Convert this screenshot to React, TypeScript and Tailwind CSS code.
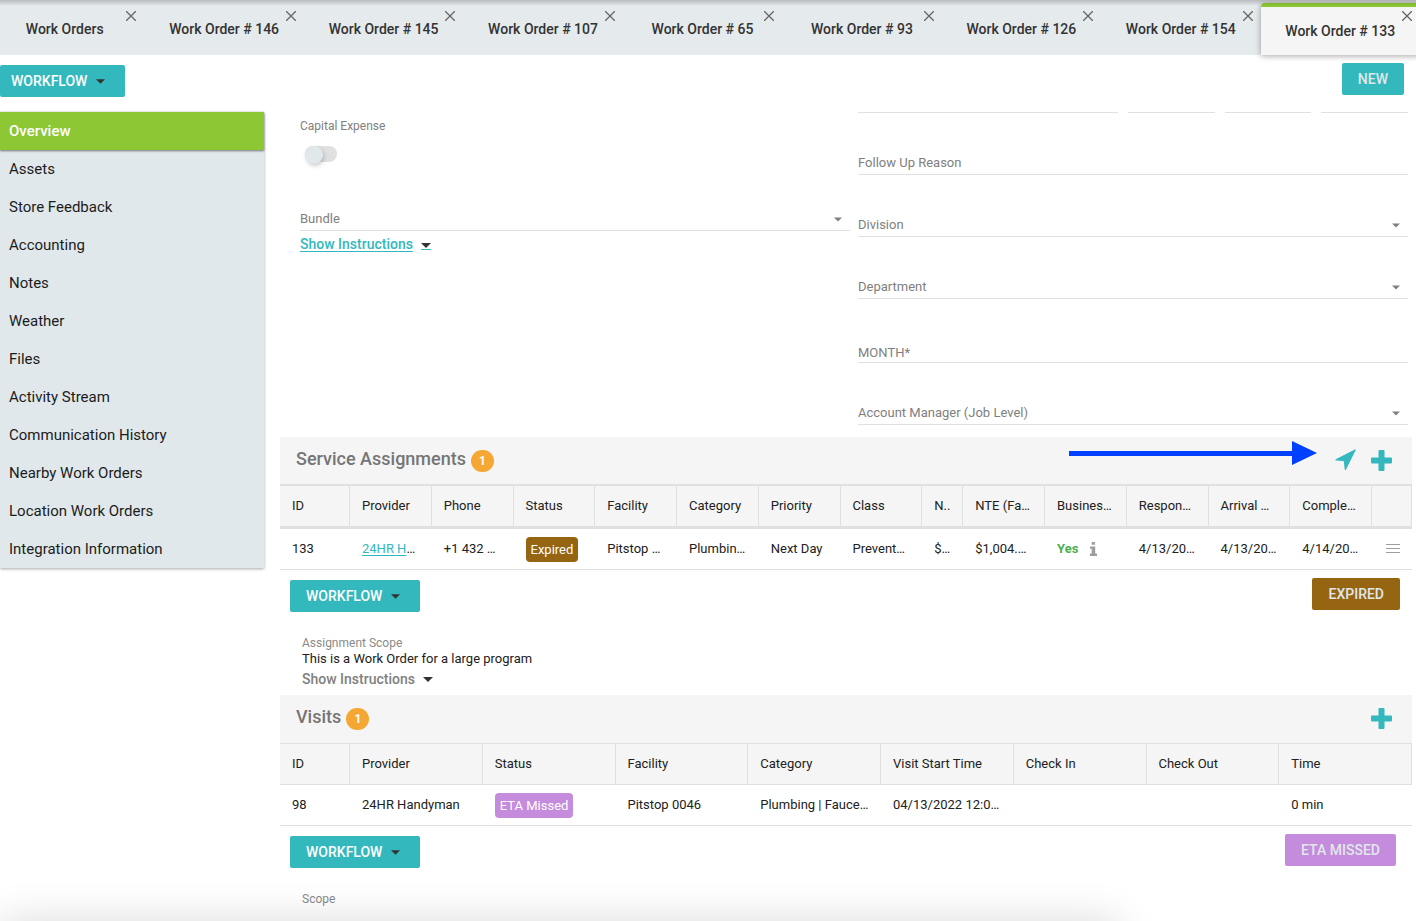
import { clsx } from "clsx";

const TABS = [
  "Work Orders",
  "Work Order # 146",
  "Work Order # 145",
  "Work Order # 107",
  "Work Order # 65",
  "Work Order # 93",
  "Work Order # 126",
  "Work Order # 154",
  "Work Order # 133",
];

const NAV = [
  "Overview",
  "Assets",
  "Store Feedback",
  "Accounting",
  "Notes",
  "Weather",
  "Files",
  "Activity Stream",
  "Communication History",
  "Nearby Work Orders",
  "Location Work Orders",
  "Integration Information",
];

const ASSIGNMENT_COLS = [
  "ID",
  "Provider",
  "Phone",
  "Status",
  "Facility",
  "Category",
  "Priority",
  "Class",
  "N..",
  "NTE (Fa…",
  "Busines…",
  "Respon…",
  "Arrival …",
  "Comple…",
  "",
];

const VISIT_COLS = [
  "ID",
  "Provider",
  "Status",
  "Facility",
  "Category",
  "Visit Start Time",
  "Check In",
  "Check Out",
  "Time",
];

function Caret({ className }: { className?: string }) {
  return (
    <svg viewBox="0 0 10 5" className={clsx("h-[5px] shrink-0", className)} aria-hidden="true">
      <path d="M0 0h10L5 5z" fill="currentColor" />
    </svg>
  );
}

function CloseIcon() {
  return (
    <svg viewBox="0 0 10 10" className="size-[10px]" aria-hidden="true">
      <path d="M0 0L10 10M10 0L0 10" stroke="currentColor" strokeWidth="1.3" />
    </svg>
  );
}

function InfoIcon() {
  return (
    <svg viewBox="0 0 7 14" className="h-3.5 w-[7px] text-[#9e9e9e]" aria-hidden="true">
      <path
        d="M1.7 0h3.2v2.8H1.7zM.3 4.6h4.9v7h1.4c.3 0 .4.1.4.4V14H0v-2c0-.3.1-.4.4-.4h1.3V6.8H0V5c0-.3.1-.4.3-.4z"
        fill="currentColor"
      />
    </svg>
  );
}

function DispatchIcon() {
  return (
    <svg viewBox="0 0 21 22" className="h-[22px] w-[21px]" aria-hidden="true">
      <path
        d="M20.3.8L10.3 20.9L9.3 11.8L.7 10.8z"
        fill="currentColor"
        stroke="currentColor"
        strokeLinejoin="round"
      />
    </svg>
  );
}

function Tab({ label, active }: { label: string; active: boolean }) {
  return (
    <div
      className={clsx(
        "relative min-w-0 flex-1",
        active &&
          "mt-[3px] rounded-t border-t-4 border-[#8dc834] bg-[#f5f5f5] shadow-[0_1px_6px_rgba(0,0,0,0.35)]",
      )}
    >
      <button
        className={clsx(
          "h-full w-full text-sm font-medium text-[#333]",
          active ? "pb-0" : "pt-0.5",
        )}
      >
        {label}
      </button>
      <button
        aria-label={`Close ${label}`}
        className={clsx("absolute right-2 text-[#666]", active ? "top-1" : "top-[11px]")}
      >
        <CloseIcon />
      </button>
    </div>
  );
}

function WorkflowButton({ className }: { className?: string }) {
  return (
    <button
      className={clsx(
        "flex h-8 items-center gap-[9px] rounded-xs bg-[#33b8be] text-sm font-medium text-white",
        className,
      )}
    >
      WORKFLOW
      <Caret className="w-[9px] text-[#333]" />
    </button>
  );
}

function Field({ label, select, className }: { label: string; select?: boolean; className?: string }) {
  return (
    <label
      className={clsx(
        "flex items-end border-b border-[#e0e0e0] text-[13px] leading-4 text-[#808080]",
        className,
      )}
    >
      <span className="shrink-0">{label}</span>
      {select ? (
        <>
          <select className="h-4 min-w-0 flex-1 appearance-none bg-transparent outline-none" />
          <Caret className="mr-2 mb-[5px] w-2" />
        </>
      ) : (
        <input className="h-4 min-w-0 flex-1 bg-transparent outline-none" />
      )}
    </label>
  );
}

function SectionHeader({ title, count, children }: { title: string; count: number; children: React.ReactNode }) {
  return (
    <div className="relative flex items-center justify-between bg-[#f5f5f5] pr-5 pl-4">
      <h2 className="flex items-center gap-[5px] pb-1 text-lg leading-11 font-medium text-[#757575]">
        {title}
        <span className="mt-1 flex h-[22px] w-[23px] items-center justify-center rounded-full bg-[#f4a733] text-xs font-bold text-white">
          {count}
        </span>
      </h2>
      <div className="flex items-center gap-[15px] pb-0.5 text-[#33b8be]">{children}</div>
    </div>
  );
}

function AddButton({ label }: { label: string }) {
  return (
    <button aria-label={label}>
      <svg viewBox="0 0 21 21" className="size-[21px]" aria-hidden="true">
        <path
          d="M8.5 0h4q1 0 1 1v6.5H20q1 0 1 1v4q0 1-1 1h-6.5V20q0 1-1 1h-4q-1 0-1-1v-6.5H1q-1 0-1-1v-4q0-1 1-1h6.5V1q0-1 1-1z"
          fill="currentColor"
        />
      </svg>
    </button>
  );
}

function StatusPill({ label, className }: { label: string; className: string }) {
  return (
    <span className={clsx("block w-fit rounded px-[5px] leading-[25px] text-white", className)}>
      {label}
    </span>
  );
}

export default function App() {
  return (
    <div className="relative h-screen overflow-hidden bg-white font-['Roboto',sans-serif] text-[#212121]">
      <header className="relative h-[55px] bg-[#e5eaed]">
        <div className="-mr-1 -ml-[15px] flex h-full">
          {TABS.map((tab, i) => (
            <Tab key={tab} label={tab} active={i === TABS.length - 1} />
          ))}
        </div>
        <div className="pointer-events-none absolute inset-x-0 top-0 h-1.5 bg-linear-to-b from-black/20 to-transparent" />
      </header>

      <div className="flex h-[57px] items-start justify-between pt-2 pr-3">
        <WorkflowButton className="mt-0.5 pr-5 pl-[11px]" />
        <button className="h-8 rounded-xs bg-[#33b8be] px-4 text-sm font-medium text-[#e0e8eb]">
          NEW
        </button>
      </div>

      <div className="flex items-start gap-4 pr-1">
        <nav className="w-[264px] shrink-0 bg-[#e0e8eb] shadow-[0_1px_3px_rgba(0,0,0,0.35)]">
          {NAV.map((item, i) => (
            <a
              key={item}
              href="#"
              className={clsx(
                "block pl-[9px] text-[15px] leading-[38px]",
                i === 0
                  ? "bg-[#8dc834] font-medium text-white shadow-[0_1px_2px_rgba(0,0,0,0.5)]"
                  : "text-[#1c1c1c]",
              )}
            >
              {item}
            </a>
          ))}
        </nav>

        <main className="min-w-0 flex-1 text-[13px]">
          <form className="grid grid-cols-2 gap-2 pr-1 pb-3 pl-5">
            <div>
              <label
                htmlFor="capital-expense"
                className="block pt-1.5 text-xs leading-4 text-[#808080]"
              >
                Capital Expense
              </label>
              <div className="relative mt-3 ml-[5px] h-[18px] w-8">
                <input
                  id="capital-expense"
                  type="checkbox"
                  role="switch"
                  className="mt-px block h-4 w-8 appearance-none rounded-full bg-[#e0e0e0]"
                />
                <span className="pointer-events-none absolute top-0 left-0 size-[18px] rounded-full bg-[#e0e8eb] shadow-[1px_2px_4px_rgba(0,0,0,0.2)]" />
              </div>
              <Field label="Bundle" select className="mt-9 h-[31px] pb-[3px]" />
              <a
                href="#"
                className="mt-[3px] flex items-center gap-2 text-sm font-medium text-[#33b8be] underline underline-offset-2"
              >
                Show Instructions
                <span className="mt-1 border-b border-[#33b8be] pb-px">
                  <Caret className="w-2.5 text-[#333]" />
                </span>
              </a>
            </div>
            <div>
              <div className="grid grid-cols-[3fr_1fr_1fr_1fr] gap-2.5">
                <div className="border-b border-[#e0e0e0]" />
                <div className="border-b border-[#e0e0e0]" />
                <div className="border-b border-[#e0e0e0]" />
                <div className="border-b border-[#e0e0e0]" />
              </div>
              <Field label="Follow Up Reason" className="h-[62px] pb-[3px]" />
              <Field label="Division" select className="h-[62px] pb-[3px]" />
              <Field label="Department" select className="h-[62px] pb-[3px]" />
              <Field label="MONTH*" className="h-16 pb-px" />
              <Field label="Account Manager (Job Level)" select className="h-[62px] pb-[3px]" />
            </div>
          </form>

          <section>
            <SectionHeader title="Service Assignments" count={1}>
              <svg
                viewBox="0 0 248 24"
                className="pointer-events-none absolute top-1 right-[95px] h-6 w-[248px]"
                aria-hidden="true"
              >
                <path d="M0 10h223V0l25 12-25 12v-9H0z" fill="#0040ff" />
              </svg>
              <button aria-label="Dispatch">
                <DispatchIcon />
              </button>
              <AddButton label="Add service assignment" />
            </SectionHeader>
            <table className="relative -mt-px w-full table-fixed border-separate border-spacing-0 text-left whitespace-nowrap">
              <colgroup>
                {ASSIGNMENT_COLS.map((col, i) => (
                  <col
                    key={i}
                    className={clsx(
                      i === 0 && "w-[70px]",
                      col === "N.." && "w-[41px]",
                      col === "" && "w-10",
                    )}
                  />
                ))}
              </colgroup>
              <thead className="bg-[#f5f5f5]">
                <tr>
                  {ASSIGNMENT_COLS.map((col, i) => (
                    <th
                      key={i}
                      className="h-[45px] border-t-2 border-r border-b-3 border-[#e0e0e0] p-0 pl-3 font-normal"
                    >
                      {col}
                    </th>
                  ))}
                </tr>
              </thead>
              <tbody>
                <tr className="*:h-[41px] *:border-b *:border-[#e0e0e0] *:p-0 *:pl-3">
                  <td>133</td>
                  <td>
                    <a href="#" className="text-[#33b8be] underline underline-offset-2">
                      24HR H
                    </a>
                    …
                  </td>
                  <td>+1 432 …</td>
                  <td>
                    <StatusPill label="Expired" className="bg-[#966512]" />
                  </td>
                  <td>Pitstop …</td>
                  <td>Plumbin…</td>
                  <td>Next Day</td>
                  <td>Prevent…</td>
                  <td>$…</td>
                  <td>$1,004.…</td>
                  <td>
                    <span className="flex items-center gap-3 font-bold text-[#4caf50]">
                      Yes
                      <InfoIcon />
                    </span>
                  </td>
                  <td>4/13/20…</td>
                  <td>4/13/20…</td>
                  <td>4/14/20…</td>
                  <td>
                    <button aria-label="Row menu" className="block pl-0.5">
                      <svg viewBox="0 0 14 10" className="h-2.5 w-3.5 text-[#9e9e9e]" aria-hidden="true">
                        <path d="M0 .5h14M0 4.5h14M0 8.5h14" stroke="currentColor" />
                      </svg>
                    </button>
                  </td>
                </tr>
              </tbody>
            </table>
            <div className="flex items-start justify-between pt-2 pr-3 pl-2.5">
              <WorkflowButton className="mt-0.5 pr-5 pl-4" />
              <button className="h-8 rounded-xs bg-[#966512] px-4 text-sm font-medium text-[#e0e8eb]">
                EXPIRED
              </button>
            </div>
            <div className="pt-[23px] pb-2 pl-[22px] leading-4">
              <p className="text-xs leading-4 text-[#8a8a8a]">Assignment Scope</p>
              <p>This is a Work Order for a large program</p>
              <button className="mt-1 flex items-center gap-2 text-sm leading-4 font-medium text-[#808080]">
                Show Instructions
                <Caret className="w-2.5 text-[#333]" />
              </button>
            </div>
          </section>

          <section>
            <SectionHeader title="Visits" count={1}>
              <AddButton label="Add visit" />
            </SectionHeader>
            <table className="w-full table-fixed border-separate border-spacing-0 text-left whitespace-nowrap">
              <colgroup>
                {VISIT_COLS.map((col, i) => (
                  <col key={col} className={clsx(i === 0 && "w-[70px]")} />
                ))}
              </colgroup>
              <thead className="bg-[#f5f5f5]">
                <tr>
                  {VISIT_COLS.map((col) => (
                    <th
                      key={col}
                      className="h-[42px] border-y border-r border-[#e0e0e0] p-0 pl-3 font-normal"
                    >
                      {col}
                    </th>
                  ))}
                </tr>
              </thead>
              <tbody>
                <tr className="*:h-[41px] *:border-b *:border-[#e0e0e0] *:p-0 *:pl-3">
                  <td>98</td>
                  <td>24HR Handyman</td>
                  <td>
                    <StatusPill label="ETA Missed" className="bg-[#c58bdc]" />
                  </td>
                  <td>Pitstop 0046</td>
                  <td>Plumbing | Fauce…</td>
                  <td>04/13/2022 12:0…</td>
                  <td />
                  <td />
                  <td>0 min</td>
                </tr>
              </tbody>
            </table>
            <div className="flex items-start justify-between pt-2 pr-4 pl-2.5">
              <WorkflowButton className="mt-0.5 pr-5 pl-4" />
              <button className="h-8 rounded-xs bg-[#c58bdc] px-4 text-sm font-medium text-[#e0e8eb]">
                ETA MISSED
              </button>
            </div>
            <p className="pt-[23px] pl-[22px] text-xs leading-4 text-[#8a8a8a]">Scope</p>
          </section>
        </main>
      </div>

      <div className="pointer-events-none absolute -bottom-10 left-0 h-10 w-[79%] shadow-[0_0_40px_rgba(0,0,0,0.15)]" />
    </div>
  );
}
